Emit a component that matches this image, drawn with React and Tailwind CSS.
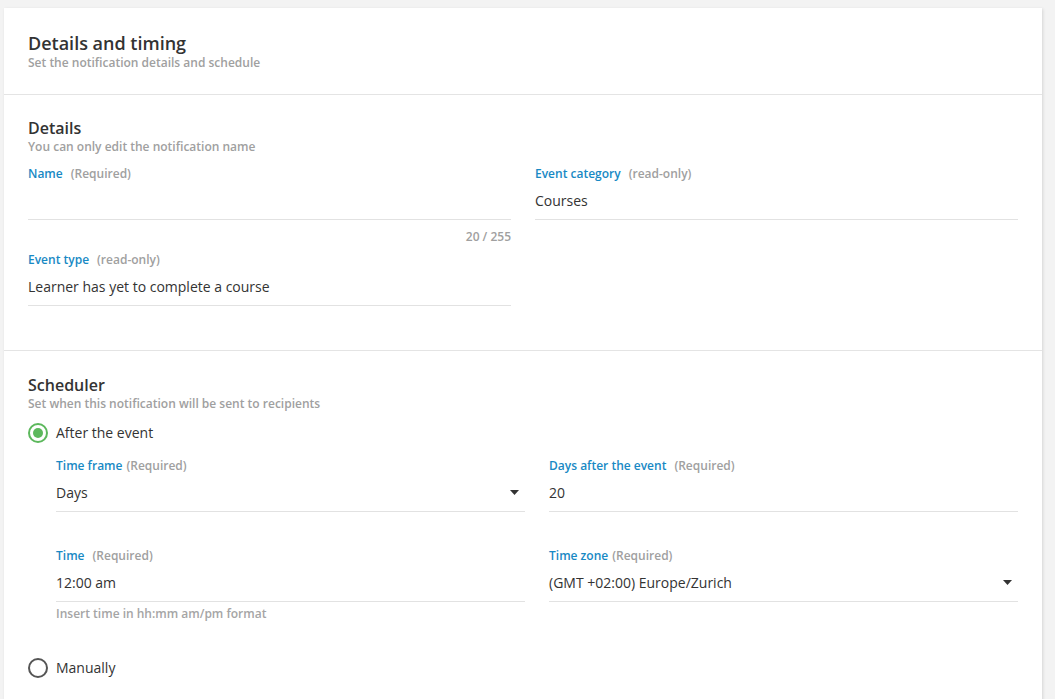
import React, { useState } from "react";

const font = { fontFamily: '"Open Sans", "Liberation Sans", sans-serif' };

const Label = ({ name, hint, tight }) => (
  <div className="flex h-[16px] items-center text-[12px] font-semibold leading-[16px]">
    <span className="text-[#1889c4]">{name}</span>
    <span className={`${tight ? "ml-1" : "ml-2"} text-[#a0a0a0]`}>{hint}</span>
  </div>
);

const Caret = () => (
  <svg width="9" height="5" viewBox="0 0 9 5" className="shrink-0">
    <path d="M0 0h9L4.5 5z" fill="#333" />
  </svg>
);

const Field = ({ name, hint, tight, value, select }) => (
  <div>
    <Label name={name} hint={hint} tight={tight} />
    <div className="flex h-[38px] items-center justify-between border-b border-[#e2e2e2] pr-[6px] text-[14px] leading-[20px] text-[#333]">
      <span>{value}</span>
      {select && <Caret />}
    </div>
  </div>
);

const Radio = ({ checked, label, onClick }) => (
  <button onClick={onClick} className="flex h-[24px] items-center gap-2 text-left">
    {checked ? (
      <span className="flex h-[20px] w-[20px] items-center justify-center rounded-full border-2 border-[#5cb85c]">
        <span className="h-[10px] w-[10px] rounded-full bg-[#5cb85c]" />
      </span>
    ) : (
      <span className="h-[20px] w-[20px] rounded-full border-2 border-[#555]" />
    )}
    <span className="text-[14px] leading-[20px] text-[#333]">{label}</span>
  </button>
);

export default function App() {
  const [mode, setMode] = useState("after");

  return (
    <div className="min-h-screen bg-[#f3f3f3] pl-[4px] pr-[13px] pt-[8px]" style={font}>
      <div className="bg-white shadow-[1px_1px_3px_rgba(0,0,0,0.12)]">
        {/* header */}
        <div className="border-b border-[#e4e4e4] px-[24px] pb-[23px] pt-[24px]">
          <h1 className="text-[18px] font-semibold leading-[22px] text-[#333]">Details and timing</h1>
          <p className="mt-[1px] text-[12px] font-semibold leading-[16px] text-[#a0a0a0]">
            Set the notification details and schedule
          </p>
        </div>

        {/* details */}
        <div className="border-b border-[#e4e4e4] px-[24px] pb-[44px] pt-[23px]">
          <h2 className="text-[16px] font-semibold leading-[21px] text-[#333]">Details</h2>
          <p className="text-[12px] font-semibold leading-[16px] text-[#a0a0a0]">
            You can only edit the notification name
          </p>
          <div className="mt-[11px] grid grid-cols-2 gap-x-[24px]">
            <div>
              <Field name="Name" hint="(Required)" value="" />
              <div className="mt-[9px] text-right text-[12px] font-semibold leading-[16px] text-[#a0a0a0]">
                20 / 255
              </div>
              <div className="mt-[7px]">
                <Field name="Event type" hint="(read-only)" value="Learner has yet to complete a course" />
              </div>
            </div>
            <div>
              <Field name="Event category" hint="(read-only)" value="Courses" />
            </div>
          </div>
        </div>

        {/* scheduler */}
        <div className="px-[24px] pb-[40px] pt-[24px]">
          <h2 className="text-[16px] font-semibold leading-[21px] text-[#333]">Scheduler</h2>
          <p className="text-[12px] font-semibold leading-[16px] text-[#a0a0a0]">
            Set when this notification will be sent to recipients
          </p>
          <div className="mt-[9px]">
            <Radio checked={mode === "after"} label="After the event" onClick={() => setMode("after")} />
          </div>
          <div className="mt-[13px] grid grid-cols-2 gap-x-[24px] pl-[28px]">
            <Field name="Time frame" hint="(Required)" tight value="Days" select />
            <Field name="Days after the event" hint="(Required)" value="20" />
            <div className="mt-[36px]">
              <Field name="Time" hint="(Required)" value="12:00 am" />
              <p className="mt-[4px] text-[12px] font-semibold leading-[16px] text-[#a5a5a5]">
                Insert time in hh:mm am/pm format
              </p>
            </div>
            <div className="mt-[36px]">
              <Field name="Time zone" hint="(Required)" tight value="(GMT +02:00) Europe/Zurich" select />
            </div>
          </div>
          <div className="mt-[34px]">
            <Radio checked={mode === "manual"} label="Manually" onClick={() => setMode("manual")} />
          </div>
        </div>
      </div>
    </div>
  );
}
